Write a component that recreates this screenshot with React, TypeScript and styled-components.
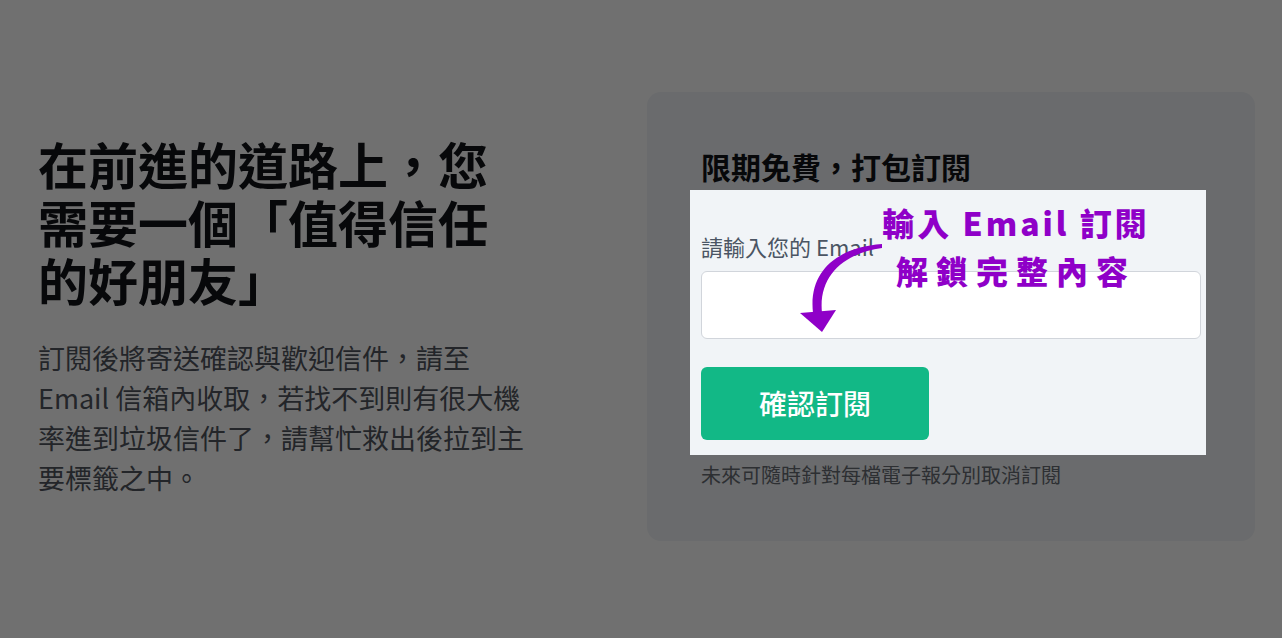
import React from "react";
import styled, { createGlobalStyle } from "styled-components";

const GlobalStyle = createGlobalStyle`
  html, body {
    margin: 0;
    padding: 0;
    background: #ffffff;
  }
  body {
    font-family: "Noto Sans CJK TC", "Noto Sans", sans-serif;
    -webkit-font-smoothing: antialiased;
  }
  * { box-sizing: border-box; }
`;

const Page = styled.main`
  min-height: 638px;
  display: flex;
  align-items: center;
  justify-content: space-between;
  padding: 0 27px 6px 38px;
`;

const Intro = styled.section`
  width: 492px;
  display: flex;
  flex-direction: column;
  gap: 30px;
`;

const Heading = styled.h1`
  margin: 0;
  font-size: 50px;
  line-height: 58px;
  font-weight: 700;
  color: #111318;
`;

const Lead = styled.p`
  margin: 0;
  font-size: 27px;
  line-height: 40px;
  font-weight: 400;
  color: #50555d;
`;

const Card = styled.section`
  width: 608px;
  background: #f1f4f7;
  border-radius: 14px;
  padding: 54px 54px 52px;
  display: flex;
  flex-direction: column;
`;

const CardTitle = styled.h2`
  margin: 0;
  font-size: 30px;
  line-height: 40px;
  font-weight: 700;
  color: #111318;
`;

const Form = styled.form`
  position: relative;
  margin-top: 45px;
  display: flex;
  flex-direction: column;
  align-items: flex-start;
`;

const Label = styled.label`
  font-size: 22px;
  line-height: 30px;
  color: #4b5563;
`;

const EmailInput = styled.input`
  margin-top: 10px;
  width: 100%;
  height: 68px;
  background: #ffffff;
  border: 1px solid #d1d5db;
  border-radius: 6px;
  outline: none;
  padding: 0 16px;
  font-size: 22px;
  font-family: inherit;
`;

const SubmitButton = styled.button`
  margin-top: 28px;
  width: 228px;
  height: 73px;
  border: none;
  border-radius: 6px;
  background: #12b886;
  color: #ffffff;
  font-family: inherit;
  font-size: 28px;
  font-weight: 500;
  cursor: pointer;
`;

const Note = styled.p`
  margin: 21px 0 0;
  font-size: 20px;
  line-height: 28px;
  color: #666b73;
`;

const Spotlight = styled.div`
  position: absolute;
  top: -41px;
  right: -5px;
  bottom: -15px;
  left: -11px;
  pointer-events: none;
  box-shadow: 0 0 0 4000px rgba(0, 0, 0, 0.56);
  z-index: 1;
`;

const Callout = styled.div`
  position: absolute;
  left: 115px;
  top: -33px;
  width: 400px;
  text-align: center;
  color: #8f00c8;
  font-family: "Noto Sans CJK TC", sans-serif;
  font-weight: 900;
  font-size: 32px;
  line-height: 48px;
  z-index: 2;
  pointer-events: none;
`;

const CalloutLine = styled.div<{ $spacing: number }>`
  letter-spacing: ${(p) => p.$spacing}px;
  white-space: nowrap;
`;

const Arrow = styled.svg`
  position: absolute;
  left: 89px;
  top: 10px;
  width: 100px;
  height: 100px;
  z-index: 2;
  pointer-events: none;
`;

export default function App() {
  return (
    <>
      <GlobalStyle />
      <Page>
        <Intro>
          <Heading>在前進的道路上，您需要一個「值得信任的好朋友」</Heading>
          <Lead>
            訂閱後將寄送確認與歡迎信件，請至 Email
            信箱內收取，若找不到則有很大機率進到垃圾信件了，請幫忙救出後拉到主要標籤之中。
          </Lead>
        </Intro>
        <Card>
          <CardTitle>限期免費，打包訂閱</CardTitle>
          <Form onSubmit={(e) => e.preventDefault()}>
            <Spotlight />
            <Label htmlFor="email">請輸入您的 Email</Label>
            <EmailInput id="email" type="email" />
            <SubmitButton type="submit">確認訂閱</SubmitButton>
            <Callout>
              <CalloutLine $spacing={3}>輸入 Email 訂閱</CalloutLine>
              <CalloutLine $spacing={8}>解鎖完整內容</CalloutLine>
            </Callout>
            <Arrow viewBox="0 0 100 100">
              <path
                d="M 92 3 C 50 6, 18 28, 23 72 L 32 72 C 28 34, 55 12, 92 7 Z"
                fill="#8f00c8"
              />
              <path d="M 10 72 L 46 69 L 32 91 Z" fill="#8f00c8" />
            </Arrow>
          </Form>
          <Note>未來可隨時針對每檔電子報分別取消訂閱</Note>
        </Card>
      </Page>
    </>
  );
}
